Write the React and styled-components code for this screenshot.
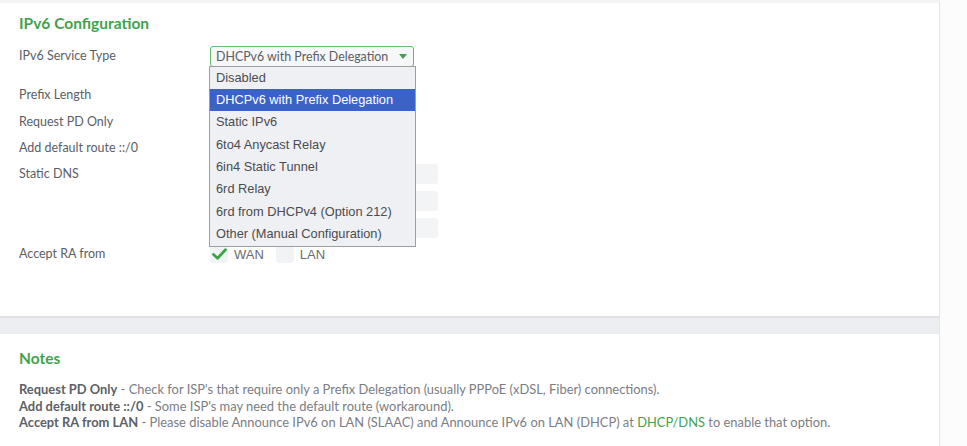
import React from "react";
import styled, { createGlobalStyle } from "styled-components";

const Global = createGlobalStyle`
  html, body { margin: 0; padding: 0; background: #fcfcfd; }
  body { font-family: "Lato", "Liberation Sans", sans-serif; color: #5a5d63; }
`;

const Page = styled.div`
  width: 940px;
  display: flex;
  flex-direction: column;
`;

const Panel = styled.section`
  background: #ffffff;
  border-right: 1px solid #e4e5ea;
  border-top: ${(p) => (p.$first ? "3px solid #f4f4f6" : "none")};
  padding: ${(p) => (p.$first ? "9px 19px 0" : "13px 19px 0")};
  height: ${(p) => p.$h}px;
  box-sizing: border-box;
  border-bottom: ${(p) => (p.$first ? "2px solid #dfe0e4" : "none")};
`;

const Band = styled.div`
  height: 16px;
  background: #edeef1;
  border-right: 1px solid #e4e5ea;
`;

const Title = styled.h2`
  margin: 0;
  font-size: 15.5px;
  font-weight: 700;
  color: #3fa34d;
  line-height: 22px;
`;

const Form = styled.div`
  display: flex;
  flex-direction: column;
  margin-top: ${(p) => p.$mt}px;
`;

const Row = styled.div`
  display: grid;
  grid-template-columns: 191px 1fr;
  align-items: ${(p) => (p.$top ? "start" : "center")};
  min-height: ${(p) => p.$h}px;
  margin-top: ${(p) => p.$mt || 0}px;
`;

const Label = styled.div`
  font-size: 12.5px;
  color: #5b5e64;
  line-height: ${(p) => p.$lh || 20}px;
`;

const Field = styled.div`
  position: relative;
  display: flex;
  flex-direction: ${(p) => (p.$col ? "column" : "row")};
  gap: ${(p) => (p.$col ? "7px" : "0")};
  align-items: ${(p) => (p.$col ? "flex-start" : "center")};
  padding-top: ${(p) => p.$pt || 0}px;
`;

const Select = styled.div`
  box-sizing: border-box;
  width: 204px;
  height: 21px;
  border: 1px solid #69b96f;
  border-radius: 3px;
  background: #f6f7f8;
  display: flex;
  align-items: center;
  justify-content: space-between;
  padding: 0 5px;
  font-size: 12.4px;
  color: #5a5d63;
`;

const Arrow = styled.span`
  width: 0;
  height: 0;
  border-left: 4.5px solid transparent;
  border-right: 4.5px solid transparent;
  border-top: 5px solid #3fa34d;
  margin-right: 1px;
`;

const Menu = styled.ul`
  position: absolute;
  top: 20px;
  left: -1px;
  z-index: 5;
  margin: 0;
  padding: 0;
  list-style: none;
  width: 207px;
  box-sizing: border-box;
  border: 1px solid #9c9ea3;
  background: #eff0f3;
  font-family: "Liberation Sans", Arial, sans-serif;
  font-size: 12.8px;
`;

const Option = styled.li`
  height: 22.4px;
  line-height: 22.4px;
  padding: 0 6px;
  color: ${(p) => (p.$active ? "#ffffff" : "#4a4c50")};
  background: ${(p) => (p.$active ? "#3b63c7" : "transparent")};
  white-space: nowrap;
`;

const Input = styled.div`
  width: 228px;
  height: 20px;
  border-radius: 3px;
  background: #f3f4f6;
`;

const Check = styled.span`
  width: 18px;
  height: 18px;
  border-radius: 3px;
  background: #f2f3f5;
  display: inline-flex;
  align-items: center;
  justify-content: center;
  margin-right: 6px;
`;

const CheckText = styled.span`
  font-family: "Liberation Sans", Arial, sans-serif;
  font-size: 13px;
  color: #6a6d72;
  margin-right: 12px;
`;

const Notes = styled.div`
  margin-top: 12px;
  font-size: 12.9px;
  line-height: 16.6px;
  color: #7a7d83;
`;

const Line = styled.div``;

const B = styled.b`
  font-weight: 700;
  color: #5c5f65;
`;

const Link = styled.a`
  color: #3fa34d;
  text-decoration: none;
`;

const options = [
  "Disabled",
  "DHCPv6 with Prefix Delegation",
  "Static IPv6",
  "6to4 Anycast Relay",
  "6in4 Static Tunnel",
  "6rd Relay",
  "6rd from DHCPv4 (Option 212)",
  "Other (Manual Configuration)",
];

const CheckMark = () => (
  <svg width="15" height="12" viewBox="0 0 15 12">
    <path d="M1.5 6.5 L5.5 10.2 L13.5 1.8" fill="none" stroke="#3aa547" strokeWidth="2.8" strokeLinecap="round" strokeLinejoin="round" />
  </svg>
);

export default function App() {
  return (
    <Page>
      <Global />
      <Panel $first $h={318}>
        <Title>IPv6 Configuration</Title>
        <Form $mt={9}>
          <Row $h={26}>
            <Label>IPv6 Service Type</Label>
            <Field>
              <Select>
                <span>DHCPv6 with Prefix Delegation</span>
                <Arrow />
              </Select>
              <Menu>
                {options.map((o, i) => (
                  <Option key={o} $active={i === 1}>{o}</Option>
                ))}
              </Menu>
            </Field>
          </Row>
          <Row $h={26} $mt={13}>
            <Label>Prefix Length</Label>
            <Field />
          </Row>
          <Row $h={27}>
            <Label>Request PD Only</Label>
            <Field />
          </Row>
          <Row $h={26}>
            <Label>Add default route ::/0</Label>
            <Field />
          </Row>
          <Row $h={80} $top>
            <Label $lh={26}>Static DNS</Label>
            <Field $col $pt={3}>
              <Input />
              <Input />
              <Input />
            </Field>
          </Row>
          <Row $h={26}>
            <Label>Accept RA from</Label>
            <Field>
              <Check><CheckMark /></Check>
              <CheckText>WAN</CheckText>
              <Check />
              <CheckText>LAN</CheckText>
            </Field>
          </Row>
        </Form>
      </Panel>
      <Band />
      <Panel $h={112}>
        <Title>Notes</Title>
        <Notes>
          <Line><B>Request PD Only</B> - Check for ISP's that require only a Prefix Delegation (usually PPPoE (xDSL, Fiber) connections).</Line>
          <Line><B>Add default route ::/0</B> - Some ISP's may need the default route (workaround).</Line>
          <Line><B>Accept RA from LAN</B> - Please disable Announce IPv6 on LAN (SLAAC) and Announce IPv6 on LAN (DHCP) at <Link href="#">DHCP/DNS</Link> to enable that option.</Line>
        </Notes>
      </Panel>
    </Page>
  );
}
